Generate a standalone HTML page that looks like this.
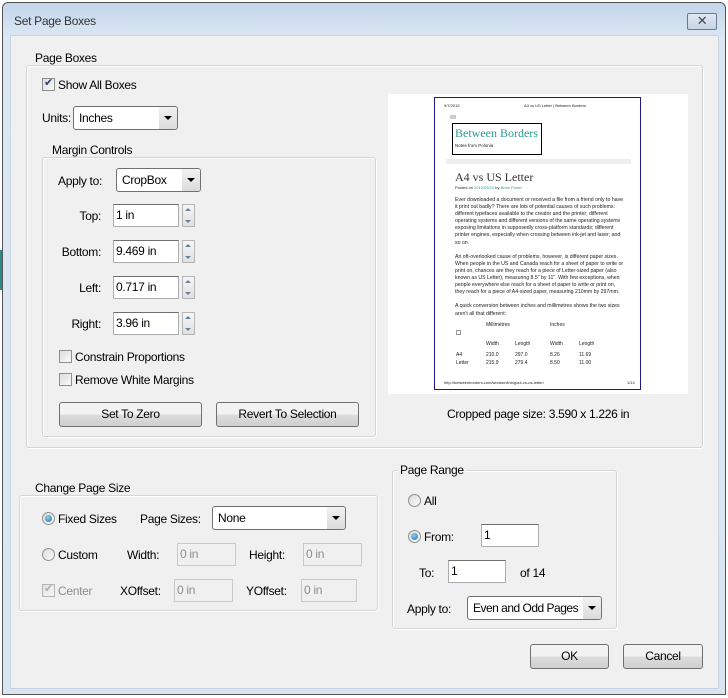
<!DOCTYPE html>
<html><head><style>
*{box-sizing:border-box;margin:0;padding:0}
body{width:728px;height:698px;background:#fff;font-family:"Liberation Sans",sans-serif;font-size:12px;color:#000;position:relative;overflow:hidden;letter-spacing:-0.3px}
.a{position:absolute}
.win{left:2px;top:2px;width:724px;height:693px;border:1px solid #555;border-radius:6px 6px 0 0;background:linear-gradient(#c4d6ea,#dbe7f4 35px,#d8e5f3);}
.content{left:10px;top:35px;width:709px;height:654px;background:#f0f0f0;border:1px solid #c9d4e0}
.grp{position:absolute;border:1px solid #d5d5d5;border-radius:3px;box-shadow:1px 1px 0 #fff inset,1px 1px 0 #fff}
.lg{position:absolute;background:#f0f0f0;padding:0 2px;font-size:12px}
.cb{position:absolute;width:13px;height:13px;border:1px solid #8e8f8f;background:linear-gradient(135deg,#dcdcdc,#fafafa)}
.rd{position:absolute;width:13px;height:13px;border:1px solid #8e8f8f;border-radius:50%;background:linear-gradient(135deg,#dcdcdc,#fafafa)}
.rd.on::after{content:"";position:absolute;left:2px;top:2px;width:7px;height:7px;border-radius:50%;background:radial-gradient(circle at 40% 35%,#8fd0f0,#1c6fa8)}
.sel{position:absolute;height:24px;border:1px solid #707070;border-radius:3px;background:#fff;padding:4px 5px;font-size:12px;white-space:nowrap;overflow:hidden}
.sel::after{content:"";position:absolute;right:0;top:0;width:18px;height:22px;background:linear-gradient(#f2f2f2,#dcdcdc)}
.sel i{position:absolute;right:5px;top:9px;z-index:2;border-left:4px solid transparent;border-right:4px solid transparent;border-top:4px solid #000}
.inp{position:absolute;height:23px;border:1px solid #abadb3;border-top-color:#707070;background:#fff;padding:3px 2px;font-size:12px}
.inp.dis{background:#f0f0f0;color:#8d8d8d;border-color:#c9c9c9}
.spin{position:absolute;width:13px;height:23px;border:1px solid #b5b5b5;background:linear-gradient(#f6f6f6,#e0e0e0)}
.spin::before{content:"";position:absolute;left:2px;top:3px;border-left:3px solid transparent;border-right:3px solid transparent;border-bottom:3px solid #6a7fa0}
.spin::after{content:"";position:absolute;left:2px;bottom:3px;border-left:3px solid transparent;border-right:3px solid transparent;border-top:3px solid #6a7fa0}
.btn{position:absolute;height:25px;border:1px solid #707070;border-radius:3px;background:linear-gradient(#f2f2f2 50%,#dddddd 50%,#cfcfcf);text-align:center;line-height:23px;font-size:12px}
.t{position:absolute;font-size:12px;white-space:nowrap}
.r{text-align:right}
.pg{font-size:5px;color:#222;position:absolute;white-space:nowrap;letter-spacing:0}
</style></head><body>
<div class="a" style="left:0;top:250px;width:2px;height:40px;background:#2a8a8a"></div>
<div class="a win"></div>
<div class="t" style="left:14px;top:14px;color:#333">Set Page Boxes</div>
<div class="a" style="left:687px;top:13px;width:30px;height:17px;border:1px solid #6f7a88;border-radius:2px;background:linear-gradient(#e0e8f2,#c8d4e2);text-align:center;line-height:14px;font-size:13px;color:#445">✕</div>
<div class="a content"></div>

<div class="grp" style="left:26px;top:65px;width:677px;height:383px"></div>
<div class="lg" style="left:33px;top:51px">Page Boxes</div>
<div class="cb" style="left:42px;top:78px"><span style="position:absolute;left:1px;top:-3px;font-size:11px;color:#2a3f7a">✔</span></div>
<div class="t" style="left:58px;top:78px">Show All Boxes</div>
<div class="t" style="left:42px;top:111px">Units:</div>
<div class="sel" style="left:73px;top:106px;width:105px">Inches<i></i></div>

<div class="grp" style="left:42px;top:157px;width:334px;height:280px"></div>
<div class="lg" style="left:50px;top:143px">Margin Controls</div>
<div class="t" style="left:58px;top:174px">Apply to:</div>
<div class="sel" style="left:116px;top:168px;width:85px">CropBox<i></i></div>

<div class="t r" style="left:40px;top:209px;width:61px">Top:</div>
<div class="inp" style="left:113px;top:204px;width:66px">1 in</div><div class="spin" style="left:182px;top:204px"></div>
<div class="t r" style="left:40px;top:245px;width:61px">Bottom:</div>
<div class="inp" style="left:113px;top:240px;width:66px">9.469 in</div><div class="spin" style="left:182px;top:240px"></div>
<div class="t r" style="left:40px;top:281px;width:61px">Left:</div>
<div class="inp" style="left:113px;top:276px;width:66px">0.717 in</div><div class="spin" style="left:182px;top:276px"></div>
<div class="t r" style="left:40px;top:317px;width:61px">Right:</div>
<div class="inp" style="left:113px;top:312px;width:66px">3.96 in</div><div class="spin" style="left:182px;top:312px"></div>

<div class="cb" style="left:59px;top:350px"></div><div class="t" style="left:75px;top:350px">Constrain Proportions</div>
<div class="cb" style="left:59px;top:373px"></div><div class="t" style="left:75px;top:373px">Remove White Margins</div>
<div class="btn" style="left:59px;top:402px;width:143px">Set To Zero</div>
<div class="btn" style="left:216px;top:402px;width:143px">Revert To Selection</div>

<div class="a" style="left:388px;top:94px;width:300px;height:300px;background:#fff"></div>
<div class="a" style="left:434px;top:97px;width:207px;height:293px;border:1px solid #1a1a8c"></div>
<div class="pg" style="left:444px;top:103px;font-size:4px">9/7/2015</div>
<div class="pg" style="left:524px;top:103px;font-size:4px">A4 vs US Letter | Between Borders</div>
<div class="a" style="left:450px;top:115px;width:6px;height:4px;background:#ccc"></div>
<div class="a" style="left:452px;top:123px;width:90px;height:32px;border:1px solid #000"></div>
<div class="t" style="left:455px;top:126px;font-family:'Liberation Serif',serif;font-size:12px;color:#2a9a95;letter-spacing:0">Between Borders</div>
<div class="pg" style="left:455px;top:143px;font-size:4.5px">Notes from Polonia</div>
<div class="a" style="left:446px;top:159px;width:185px;height:5px;background:#eee"></div>
<div class="t" style="left:455px;top:170px;font-family:'Liberation Serif',serif;font-size:12px;color:#333;letter-spacing:0">A4 vs US Letter</div>
<div class="pg" style="left:455px;top:185px;font-size:4px">Posted on <span style="color:#2a9a95">2012/05/10</span> by <span style="color:#2a9a95">Brian Porter</span></div>
<div class="pg" style="left:455px;top:197px;line-height:7.1px;white-space:normal;width:170px;font-size:5.2px">Ever downloaded a document or received a file from a friend only to have it print out badly? There are lots of potential causes of such problems: different typefaces available to the creator and the printer; different operating systems and different versions of the same operating systems exposing limitations in supposedly cross-platform standards; different printer engines, especially when crossing between ink-jet and laser; and so on.<br><br>An oft-overlooked cause of problems, however, is different paper sizes. When people in the US and Canada reach for a sheet of paper to write or print on, chances are they reach for a piece of Letter-sized paper (also known as US Letter), measuring 8.5" by 11". With few exceptions, when people everywhere else reach for a sheet of paper to write or print on, they reach for a piece of A4-sized paper, measuring 210mm by 297mm.<br><br>A quick conversion between inches and millimetres shows the two sizes aren't all that different:</div>
<div class="pg" style="left:486px;top:322px">Millimetres</div><div class="pg" style="left:550px;top:322px">Inches</div>
<div class="a" style="left:456px;top:330px;width:5px;height:5px;border:1px solid #999"></div>
<div class="pg" style="left:486px;top:341px">Width</div><div class="pg" style="left:515px;top:341px">Length</div><div class="pg" style="left:550px;top:341px">Width</div><div class="pg" style="left:579px;top:341px">Length</div>
<div class="pg" style="left:456px;top:352px">A4</div><div class="pg" style="left:486px;top:352px">210.0</div><div class="pg" style="left:515px;top:352px">297.0</div><div class="pg" style="left:550px;top:352px">8.26</div><div class="pg" style="left:579px;top:352px">11.69</div>
<div class="pg" style="left:456px;top:360px">Letter</div><div class="pg" style="left:486px;top:360px">215.9</div><div class="pg" style="left:515px;top:360px">279.4</div><div class="pg" style="left:550px;top:360px">8.50</div><div class="pg" style="left:579px;top:360px">11.00</div>
<div class="pg" style="left:444px;top:380px;font-size:4px">http://betweenborders.com/wordsmithing/a4-vs-us-letter/</div><div class="pg" style="left:627px;top:380px;font-size:4px">1/14</div>
<div class="t" style="left:447px;top:407px">Cropped page size: 3.590 x 1.226 in</div>

<div class="grp" style="left:19px;top:495px;width:359px;height:116px"></div>
<div class="lg" style="left:33px;top:481px">Change Page Size</div>
<div class="rd on" style="left:42px;top:512px"></div><div class="t" style="left:58px;top:512px">Fixed Sizes</div>
<div class="t" style="left:140px;top:512px">Page Sizes:</div>
<div class="sel" style="left:212px;top:506px;width:134px">None<i></i></div>
<div class="rd" style="left:42px;top:548px"></div><div class="t" style="left:58px;top:548px">Custom</div>
<div class="t" style="left:127px;top:548px">Width:</div><div class="inp dis" style="left:177px;top:543px;width:59px">0 in</div>
<div class="t" style="left:249px;top:548px">Height:</div><div class="inp dis" style="left:303px;top:543px;width:59px">0 in</div>
<div class="cb" style="left:42px;top:584px;opacity:.6"><span style="position:absolute;left:1px;top:-3px;font-size:11px;color:#888">✔</span></div><div class="t" style="left:58px;top:584px;color:#8d8d8d">Center</div>
<div class="t" style="left:120px;top:584px">XOffset:</div><div class="inp dis" style="left:174px;top:579px;width:59px">0 in</div>
<div class="t" style="left:246px;top:584px">YOffset:</div><div class="inp dis" style="left:301px;top:579px;width:56px">0 in</div>

<div class="grp" style="left:392px;top:470px;width:225px;height:159px"></div>
<div class="lg" style="left:398px;top:463px">Page Range</div>
<div class="rd" style="left:408px;top:494px"></div><div class="t" style="left:424px;top:494px">All</div>
<div class="rd on" style="left:408px;top:530px"></div><div class="t" style="left:424px;top:530px">From:</div>
<div class="inp" style="left:481px;top:524px;width:58px">1</div>
<div class="t" style="left:419px;top:566px">To:</div>
<div class="inp" style="left:448px;top:560px;width:58px">1</div>
<div class="t" style="left:520px;top:566px">of 14</div>
<div class="t" style="left:407px;top:602px">Apply to:</div>
<div class="sel" style="left:467px;top:596px;width:135px;letter-spacing:-0.5px">Even and Odd Pages<i></i></div>

<div class="btn" style="left:530px;top:644px;width:79px">OK</div>
<div class="btn" style="left:623px;top:644px;width:80px">Cancel</div>
</body></html>
